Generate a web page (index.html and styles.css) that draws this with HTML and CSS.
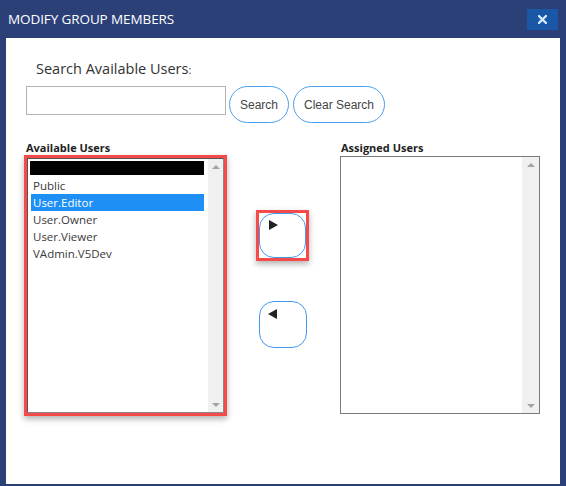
FILE: index.html
```html
<!DOCTYPE html>
<html lang="en">
<head>
    <meta charset="UTF-8">
    <meta name="viewport" content="width=device-width, initial-scale=1.0">
    <title>Modify Group Members</title>
    <link rel="stylesheet" href="styles.css">
</head>
<body>

    <div class="dialog">
        <div class="dialog-header">
            <span class="dialog-title">MODIFY GROUP MEMBERS</span>
            <button class="close-btn" title="Close">
                <svg width="9" height="9" viewBox="0 0 9 9"><path d="M1 1 L8 8 M8 1 L1 8" stroke="#d4e8fa" stroke-width="2.3" stroke-linecap="square"/></svg>
            </button>
        </div>

        <div class="dialog-body">
            <div class="search-label">Search Available Users<span class="colon">:</span></div>
            <div class="search-row">
                <input type="text" class="search-input">
                <button class="pill-btn search-btn">Search</button>
                <button class="pill-btn clear-btn">Clear Search</button>
            </div>

            <div class="lists">
                <div class="col col-left">
                    <div class="list-label">Available Users</div>
                    <div class="listbox flagged">
                        <div class="listbox-inner">
                            <div class="items">
                                <div class="item first"><div class="redacted"></div></div>
                                <div class="item">Public</div>
                                <div class="item selected">User.Editor</div>
                                <div class="item">User.Owner</div>
                                <div class="item">User.Viewer</div>
                                <div class="item">VAdmin.V5Dev</div>
                            </div>
                            <div class="scrollbar">
                                <span class="arrow-up"></span>
                                <span class="arrow-down"></span>
                            </div>
                        </div>
                    </div>
                </div>

                <div class="col col-mid">
                    <div class="flag-wrap">
                        <button class="move-btn add-btn">
                            <svg width="9" height="10" viewBox="0 0 9 10"><polygon points="0,0 9,5 0,10" fill="#222"/></svg>
                        </button>
                    </div>
                    <button class="move-btn remove-btn">
                        <svg width="9" height="10" viewBox="0 0 9 10"><polygon points="9,0 0,5 9,10" fill="#222"/></svg>
                    </button>
                </div>

                <div class="col col-right">
                    <div class="list-label">Assigned Users</div>
                    <div class="listbox plain">
                        <div class="items"></div>
                        <div class="scrollbar">
                            <span class="arrow-up"></span>
                            <span class="arrow-down"></span>
                        </div>
                    </div>
                </div>
            </div>
        </div>
    </div>

</body>
</html>
```

FILE: styles.css
```css
body {
    margin: 0;
    padding: 0;
    background-color: #2c4078;
    font-family: 'Open Sans', 'Noto Sans', sans-serif;
    color: #333;
}
.dialog {
    width: 566px;
    height: 486px;
}
.dialog-header {
    height: 38px;
    display: flex;
    align-items: center;
    justify-content: space-between;
    padding: 0 8px;
    box-sizing: border-box;
}
.dialog-title {
    color: #fff;
    font-size: 13.5px;
    letter-spacing: -0.1px;
}
.close-btn {
    width: 31px;
    height: 21px;
    border: none;
    padding: 0;
    margin-top: 1px;
    background-color: #1b57a7;
    display: flex;
    align-items: center;
    justify-content: center;
}
.dialog-body {
    background-color: #fff;
    margin: 0 6px;
    height: 446px;
    overflow: hidden;
}
.search-label {
    margin: 21px 0 0 30px;
    font-size: 14.5px;
    line-height: 20px;
    color: #333;
}
.search-label .colon {
    font-size: 11px;
}
.search-row {
    display: flex;
    align-items: flex-start;
    margin: 6px 0 0 20px;
}
.search-input {
    width: 200px;
    height: 29px;
    box-sizing: border-box;
    border: 1px solid #b3b3b3;
    margin: 0;
}
.pill-btn {
    height: 37px;
    box-sizing: border-box;
    border: 1px solid #4aa0ee;
    border-radius: 19px;
    background-color: #fff;
    font-family: 'Liberation Sans', Arial, sans-serif;
    font-size: 12px;
    color: #444;
    padding: 0 10px;
    white-space: nowrap;
}
.search-btn {
    width: 60px;
    margin-left: 3px;
}
.clear-btn {
    width: 92px;
    padding: 0 8px;
    margin-left: 4px;
}
.lists {
    display: flex;
    margin-top: 18px;
}
.col-left {
    width: 203px;
    margin-left: 18px;
}
.list-label {
    font-size: 11px;
    font-weight: 700;
    line-height: 14px;
    padding-left: 2px;
    color: #222;
}
.col-right .list-label {
    padding-left: 1px;
}
.listbox {
    box-sizing: border-box;
    display: flex;
}
.listbox.flagged {
    height: 261px;
    border: 3px solid #f54a4a;
    box-shadow: 0 3px 6px rgba(0, 0, 0, 0.3);
}
.listbox-inner {
    flex: 1;
    display: flex;
    border: 1px solid #555;
    border-right-color: #888;
    border-bottom-color: #888;
}
.items {
    flex: 1;
    padding: 1px 4px 0 2px;
}
.item {
    height: 17px;
    line-height: 17px;
    font-size: 11.5px;
    padding-left: 3px;
    color: #3a3a3a;
    white-space: nowrap;
}
.item.first {
    height: 16px;
}
.item.selected {
    background-color: #1e8ff5;
    color: #fff;
    margin-left: 1px;
    padding-left: 2px;
}
.redacted {
    height: 14px;
    margin: 1px 0 1px -3px;
    background-color: #000;
}
.scrollbar {
    width: 15px;
    background-color: #f0f0f0;
    display: flex;
    flex-direction: column;
    justify-content: space-between;
    align-items: center;
    padding: 6px 0 5px;
    box-sizing: border-box;
}
.arrow-up {
    width: 0;
    height: 0;
    border-left: 4px solid transparent;
    border-right: 4px solid transparent;
    border-bottom: 4px solid #a3a3a3;
}
.arrow-down {
    width: 0;
    height: 0;
    border-left: 4px solid transparent;
    border-right: 4px solid transparent;
    border-top: 4px solid #a3a3a3;
}
.col-mid {
    width: 48px;
    margin-left: 32px;
    padding-top: 72px;
}
.flag-wrap {
    width: 47px;
    margin: -3px 0 0 -3px;
    border: 3px solid #f54a4a;
    box-shadow: 0 3px 6px rgba(0, 0, 0, 0.3);
    line-height: 0;
}
.move-btn {
    display: flex;
    align-items: flex-start;
    justify-content: flex-start;
    width: 47px;
    height: 45px;
    box-sizing: border-box;
    border: 1px solid #3f9af0;
    border-radius: 15px;
    background-color: #fff;
    padding: 6px 0 0 9px;
}
.remove-btn {
    width: 48px;
    height: 47px;
    margin-top: 40px;
    padding: 7px 0 0 8px;
}
.col-right {
    width: 200px;
    margin-left: 33px;
}
.listbox.plain {
    height: 258px;
    margin-top: 1px;
    border: 1px solid #7a7a7a;
}
.listbox.plain .scrollbar {
    width: 17px;
}
```
